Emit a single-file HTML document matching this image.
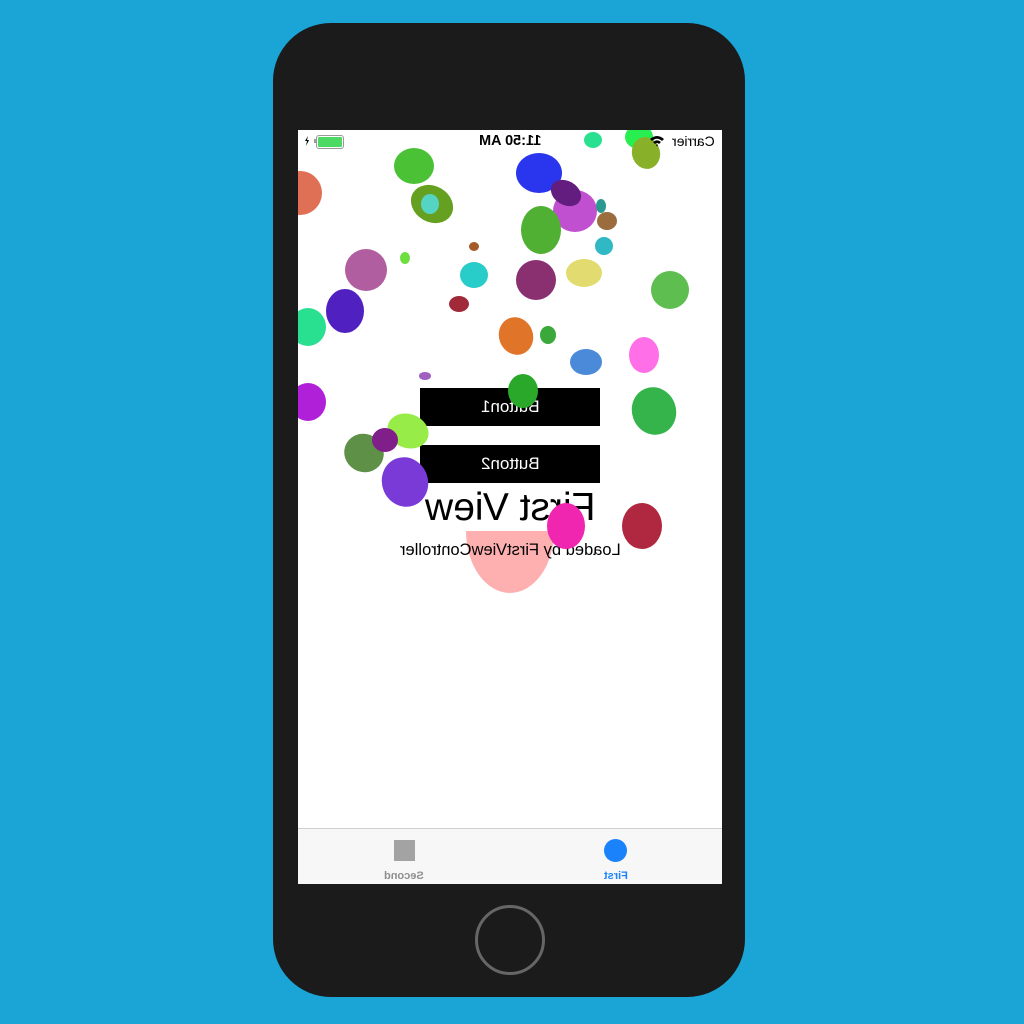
<!DOCTYPE html>
<html><head><style>
html,body{margin:0;padding:0;width:1024px;height:1024px;background:#1ba4d6;overflow:hidden;font-family:"Liberation Sans",sans-serif}
.phone{position:absolute;left:273px;top:23px;width:472px;height:974px;background:#1b1b1b;border-radius:58px}
.screen{position:absolute;left:298px;top:130px;width:424px;height:754px;background:#fff;overflow:hidden}
.e{position:absolute;border-radius:50%}
.m{transform:scaleX(-1);display:inline-block}
.btn{position:absolute;left:122px;width:180px;height:38px;background:#000;color:#fff;font-size:17px;text-align:center;line-height:38px}
.tab{position:absolute;left:0;top:698px;width:424px;height:56px;background:#f7f7f7;border-top:1px solid #cfcfcf}
.home{position:absolute;left:475px;top:905px;width:70px;height:70px;border:3px solid #666;border-radius:50%;box-sizing:border-box}
</style></head><body>
<div class="phone"></div>
<div class="home"></div>
<div class="screen">
<div style="position:absolute;left:168px;top:401px;width:88px;height:62px;overflow:hidden"><div class="e" style="left:0;top:-62px;width:88px;height:124px;background:#feb0b0"></div></div>
<div class="e" style="left:96px;top:18px;width:40px;height:36px;background:#4bc236"></div>
<div class="e" style="left:112px;top:56px;width:44px;height:36px;background:#66a020;transform:rotate(30deg)"></div>
<div class="e" style="left:123px;top:64px;width:18px;height:20px;background:#55d4c4"></div>
<div class="e" style="left:-20px;top:41px;width:44px;height:44px;background:#e07055"></div>
<div class="e" style="left:218px;top:23px;width:46px;height:40px;background:#2a35ee"></div>
<div class="e" style="left:255px;top:60px;width:44px;height:42px;background:#c050d0"></div>
<div class="e" style="left:252px;top:51px;width:32px;height:24px;background:#621d7e;transform:rotate(30deg)"></div>
<div class="e" style="left:223px;top:76px;width:40px;height:48px;background:#4fb033"></div>
<div class="e" style="left:298px;top:69px;width:10px;height:14px;background:#2a9a90"></div>
<div class="e" style="left:299px;top:82px;width:20px;height:18px;background:#9a6c3e"></div>
<div class="e" style="left:297px;top:107px;width:18px;height:18px;background:#30b8c4"></div>
<div class="e" style="left:171px;top:112px;width:10px;height:9px;background:#a55a2a"></div>
<div class="e" style="left:102px;top:122px;width:10px;height:12px;background:#6de040"></div>
<div class="e" style="left:162px;top:132px;width:28px;height:26px;background:#28ccc8"></div>
<div class="e" style="left:218px;top:130px;width:40px;height:40px;background:#8a3070"></div>
<div class="e" style="left:268px;top:129px;width:36px;height:28px;background:#e2dc70"></div>
<div class="e" style="left:47px;top:119px;width:42px;height:42px;background:#b05ea0"></div>
<div class="e" style="left:28px;top:159px;width:38px;height:44px;background:#5020c0"></div>
<div class="e" style="left:-8px;top:178px;width:36px;height:38px;background:#28e090"></div>
<div class="e" style="left:151px;top:166px;width:20px;height:16px;background:#a02a3a"></div>
<div class="e" style="left:201px;top:187px;width:34px;height:38px;background:#e07428;transform:rotate(-20deg)"></div>
<div class="e" style="left:242px;top:196px;width:16px;height:18px;background:#3aa83a"></div>
<div class="e" style="left:272px;top:219px;width:32px;height:26px;background:#4a8ad8"></div>
<div class="e" style="left:331px;top:207px;width:30px;height:36px;background:#ff70e8"></div>
<div class="e" style="left:353px;top:141px;width:38px;height:38px;background:#5ebf50"></div>
<div class="e" style="left:286px;top:2px;width:18px;height:16px;background:#28e090"></div>
<div class="e" style="left:327px;top:-5px;width:28px;height:24px;background:#28ee50"></div>
<div class="e" style="left:334px;top:7px;width:28px;height:32px;background:#88b028;transform:rotate(-15deg)"></div>
<div class="e" style="left:121px;top:242px;width:12px;height:8px;background:#a060c0"></div>
<div class="e" style="left:-8px;top:253px;width:36px;height:38px;background:#b020d8"></div>
<div class="e" style="left:334px;top:257px;width:44px;height:48px;background:#34b44a;transform:rotate(-20deg)"></div>
<div class="btn" style="top:258px"><span class="m">Button1</span></div>
<div class="btn" style="top:315px"><span class="m">Button2</span></div>
<div class="e" style="left:210px;top:244px;width:30px;height:34px;background:#2aa82a"></div>
<div class="e" style="left:89px;top:284px;width:42px;height:34px;background:#98ec48;transform:rotate(20deg)"></div>
<div class="e" style="left:46px;top:304px;width:40px;height:38px;background:#5e9048;transform:rotate(30deg)"></div>
<div class="e" style="left:74px;top:298px;width:26px;height:24px;background:#801f8a"></div>
<div class="e" style="left:84px;top:327px;width:46px;height:50px;background:#7a3ad8;transform:rotate(-20deg)"></div>
<div style="position:absolute;left:0;width:424px;top:356px;text-align:center;font-size:39px;line-height:44px"><span class="m">First View</span></div>
<div style="position:absolute;left:0;width:424px;top:411px;text-align:center;font-size:16.5px;line-height:18px"><span class="m">Loaded by FirstViewController</span></div>
<div class="e" style="left:249px;top:373px;width:38px;height:46px;background:#f025b0"></div>
<div class="e" style="left:324px;top:373px;width:40px;height:46px;background:#b02840"></div>
<div style="position:absolute;left:0;width:424px;top:3px;text-align:center;font-size:14.5px;font-weight:bold;line-height:17px"><span class="m">11:50 AM</span></div>
<div style="position:absolute;right:7px;top:3px;font-size:14px;line-height:17px"><span class="m">Carrier</span></div>
<svg style="position:absolute;left:351px;top:5px" width="16" height="12" viewBox="0 0 16 12"><path d="M1 4 Q8 -2 15 4 L13 6 Q8 1.5 3 6Z M4 7 Q8 3.5 12 7 L10 9 Q8 7 6 9Z M7 10 L8 11.5 L9 10 Q8 9 7 10Z" fill="#000"/></svg>
<div style="position:absolute;left:18px;top:5px;width:24px;height:10px;border:1px solid #999;border-radius:3px;padding:1px;box-sizing:content-box"><div style="width:24px;height:10px;background:#4cd964;border-radius:1px"></div></div>
<div style="position:absolute;left:16px;top:9px;width:2px;height:4px;background:#999"></div>
<svg style="position:absolute;left:6px;top:6px" width="6" height="10" viewBox="0 0 6 10"><path d="M4 0 L1 5 L3 5 L2 10 L5 4 L3 4Z" fill="#000"/></svg>
<div class="tab">
<div style="position:absolute;left:306px;top:10px;width:23px;height:23px;border-radius:50%;background:#1a82fb"></div>
<div style="position:absolute;left:96px;top:11px;width:21px;height:21px;background:#a3a3a3"></div>
<div style="position:absolute;left:288px;width:60px;top:41px;text-align:center;font-size:11px;color:#1a82fb;font-weight:bold"><span class="m">First</span></div>
<div style="position:absolute;left:76px;width:60px;top:41px;text-align:center;font-size:11px;color:#8e8e8e;font-weight:bold"><span class="m">Second</span></div>
</div>
</div>
</body></html>
